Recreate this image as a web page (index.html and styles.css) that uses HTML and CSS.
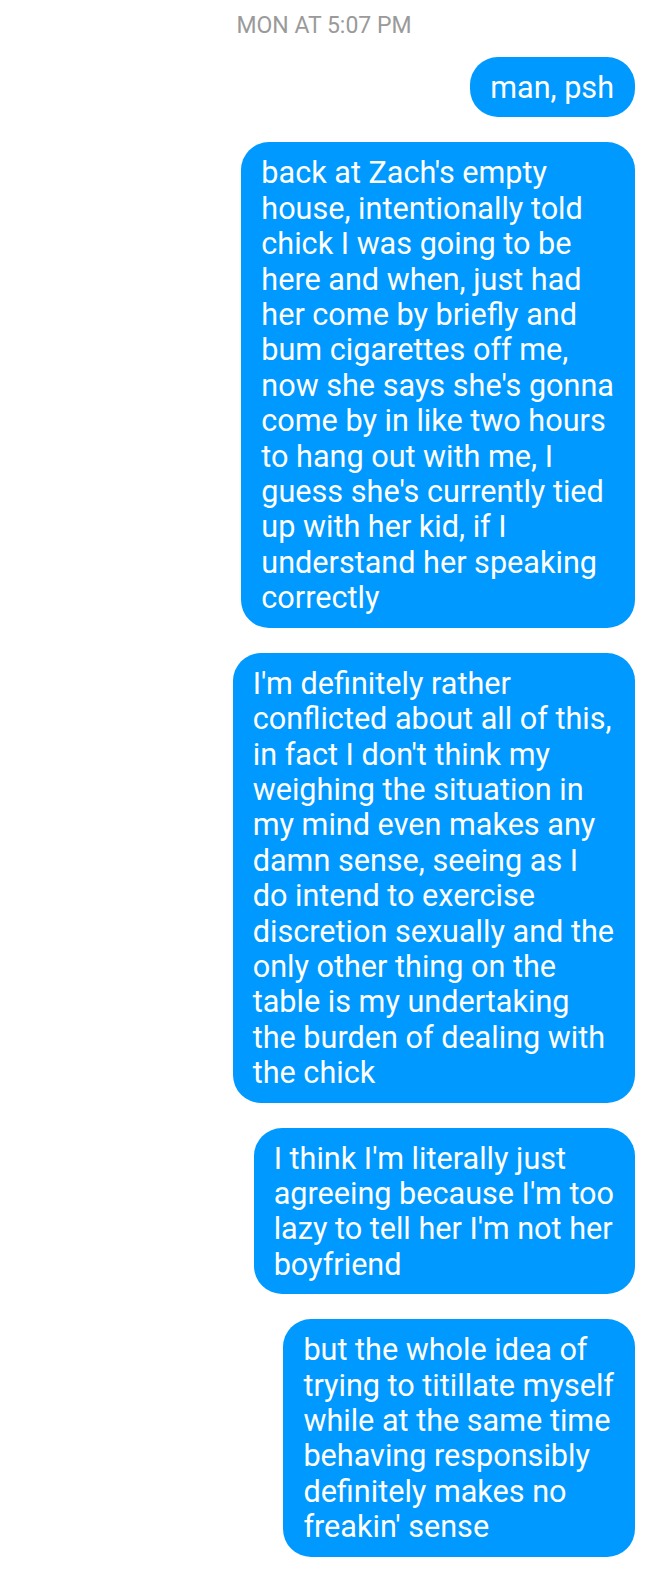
FILE: index.html
```html
<!DOCTYPE html>
<html>
<head>
<meta charset="utf-8">
<link rel="stylesheet" href="styles.css">
</head>
<body>
<div class="thread">
  <div class="stamp">MON AT 5:07 PM</div>
  <div class="bubble">man, psh</div>
  <div class="bubble">back at Zach's empty<br>house, intentionally told<br>chick I was going to be<br>here and when, just had<br>her come by briefly and<br>bum cigarettes off me,<br>now she says she's gonna<br>come by in like two hours<br>to hang out with me, I<br>guess she's currently tied<br>up with her kid, if I<br>understand her speaking<br>correctly</div>
  <div class="bubble">I'm definitely rather<br>conflicted about all of this,<br>in fact I don't think my<br>weighing the situation in<br>my mind even makes any<br>damn sense, seeing as I<br>do intend to exercise<br>discretion sexually and the<br>only other thing on the<br>table is my undertaking<br>the burden of dealing with<br>the chick</div>
  <div class="bubble">I think I'm literally just<br>agreeing because I'm too<br>lazy to tell her I'm not her<br>boyfriend</div>
  <div class="bubble">but the whole idea of<br>trying to titillate myself<br>while at the same time<br>behaving responsibly<br>definitely makes no<br>freakin' sense</div>
</div>
</body>
</html>
```
FILE: styles.css
```css
html, body {
  margin: 0;
  padding: 0;
  background: #ffffff;
}
body {
  font-family: Roboto, "Liberation Sans", sans-serif;
}
.thread {
  display: flex;
  flex-direction: column;
  align-items: flex-end;
  padding: 13px 13px 0 0;
  gap: 25px;
}
.stamp {
  align-self: center;
  margin-left: 13px;
  font-size: 23px;
  line-height: 25px;
  color: #9a9a9a;
  margin-bottom: -6px;
}
.bubble {
  background: #0099ff;
  color: #ffffff;
  font-size: 30.6px;
  line-height: 35.4px;
  padding: 13px 21px 12px 20px;
  border-radius: 28px;
  white-space: nowrap;
}
```
